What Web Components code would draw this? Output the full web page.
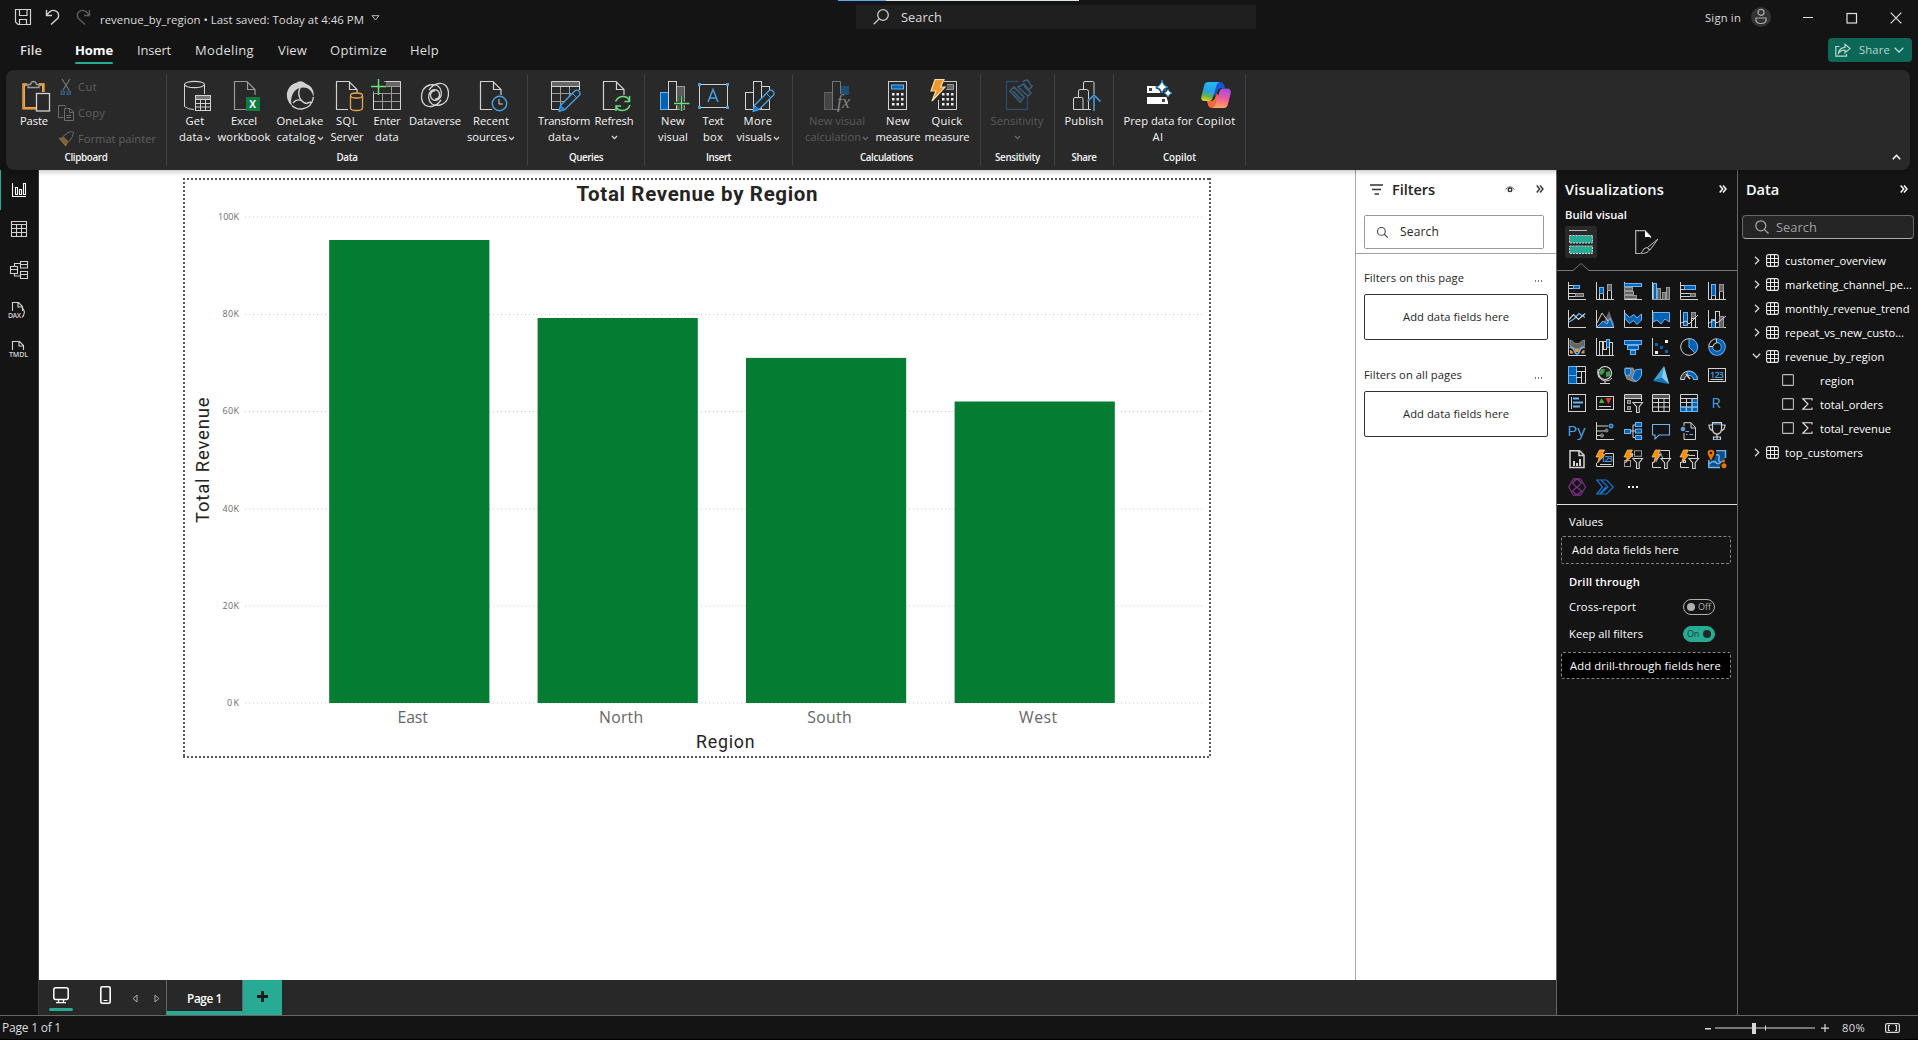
<!DOCTYPE html>
<html lang="en">
<head>
<meta charset="utf-8">
<title>revenue_by_region</title>
<style>
html,body{margin:0;padding:0;background:#141414;width:1918px;height:1040px;overflow:hidden;font-family:"Open Sans","Noto Sans",sans-serif;color:#fff}
</style>
</head>
<body>
<app-window></app-window>
<script>
const W='#d2d2d2', B='#0063b5', L='#6cb4f0', G='#646464', H='#9a9a9a', O='#e8912d', GR='#6be07a', SK='#4a9fe0';
const s=(d,c=W,f='none',w=1)=>`<path d="${d}" stroke="${c}" fill="${f}" stroke-width="${w}"/>`;
const r=(x,y,w,h,c=W,f='none',k=1)=>`<rect x="${x}" y="${y}" width="${w}" height="${h}" stroke="${c}" fill="${f}" stroke-width="${k}"/>`;
const f=(x,y,w,h,c)=>`<rect x="${x}" y="${y}" width="${w}" height="${h}" fill="${c}"/>`;
const c=(x,y,q,st=W,fi='none',w=1)=>`<circle cx="${x}" cy="${y}" r="${q}" stroke="${st}" fill="${fi}" stroke-width="${w}"/>`;
const tx=(x,y,sz,t,col,e='')=>`<text x="${x}" y="${y}" font-size="${sz}" fill="${col}" font-family="Open Sans" ${e}>${t}</text>`;
const doc=(x,col=W)=>s(`M${x+21} 16V10.5L${x+13} 2.5H${x}.5V30.5H${x+12}M${x+13.5} 2.5V10.5H${x+21}`,col,'none',1.2);
const pencil=s('M12.5 26.5L26.5 12.2a3 3 0 0 1 4.6 0a3 3 0 0 1 0 4.4L17 30.5L11.3 32.2Z',SK,'#292929',1.4)+s('M12.5 26.5L17 30.5L11.3 32.2Z',SK,'#0078d4')+s('M24.5 14.5l4 4',SK);
const axis=s('M.5 0V17.5H18');
const bolt=`<path d="M3.5 0H8.5L6 4.5H9L1.5 13L3.3 7H0Z" fill="#ff8c00" stroke="#ffd28a" stroke-width=".7"/>`;
const fun=s('M9 8.5H18.5L15.2 12.7V18.5H12.6V12.7Z',W,'#141414',1.1);
const I={
 paste:[32,32,s('M9 5.5H5.7V29.3H18M21 5.5H25.3V13','#f2c078','none',2.6)+s('M9 5.5H5.7V29.3H18M21 5.5H25.3V13',O,'none',1.6)+s('M10 8.5V5.5H12.5Q13 2.5 15.5 2.5T18.5 5.5H21V8.5Z',H,'#292929',1.4)+r(18.5,14.5,13,17.5,W,'#292929',1.3)],
 cut:[16,16,s('M4 0L11 11M12 0L5 11','#767676','none',1.2)+r(3,12,3.5,3.5,'#335f80','#234a66')+r(9,12,3.5,3.5,'#335f80','#234a66')],
 copy:[16,16,s('M5.500 12.500H.5V.5H7L8 2',"#6c6c6c")+s('M6.500 3.500H12L15.500 7V15.500H6.500ZM11.500 3.500V7.500H15.500M8.500 10.500H13M8.500 12.500H13',"#6c6c6c")],
 painter:[16,16,s('M5 5.500L10.500 11L14.500 5.500L15.500 1.500L13.500 .5L10 1.500Z','#6c6c6c')+`<path d="M1 7L5.500 6L10.500 11L8 15.500Z" fill="#7e6434"/>`+s('M1 7L8 15','#8e7c50')],
 getdata:[32,32,'<ellipse cx="15.500" cy="5.500" rx="10" ry="3.200" fill="none" stroke="#d2d2d2" stroke-width="1.200"/>'+s('M5.500 5.500V27.500Q9 30.500 15 30.500M25.500 5.500V15')+r(16.500,16.500,15,15,W,'#292929')+f(17,17,14,3,'#777')+s('M16.500 20.500H31.500M16.500 24.500H31.500M16.500 28H31.500M21.500 20.500V31.500M26.500 20.500V31.500')],
 excel:[32,32,doc(6,H)+f(18,18,14,14,'#107c41')+tx(21.200,29,10,'X','#fff','font-weight="700"')],
 onelake:[32,32,`<path d="M13 3.500A13 13 0 0 0 4.500 22.500Q5.500 25.500 8 26.500Q6 21 8.500 15.500T16 9Q22 7.500 26 11Q29 14 29.500 18Q30.500 11 26 7Q23 5 21.500 4.500Q17 .5 13 3.500Z" fill="#d0d0d0"/>`+s('M8 26.500Q12 30.500 18 30Q28 28.500 29.500 18M16 9Q13 15 17 21Q19 23.500 22 24.500L27 23M9 24Q13 19 18 22',W,'none',1.400)],
 sql:[32,32,doc(5)+'<rect x="18" y="16" width="14" height="16" fill="#292929"/><path d="M19.500 17V29Q19.500 31.500 25.500 31.500T31.500 29V17" fill="#292929" stroke="#e8a54f" stroke-width="1.300"/><ellipse cx="25.500" cy="16.500" rx="6" ry="2.500" fill="#292929" stroke="#e8a54f" stroke-width="1.300"/>'],
 enter:[32,32,f(15,3,15,4,'#666')+s('M13 2.500H29.500V30.500H2.500V12M16 7.500H29.500M2.500 14.500H29.500M2.500 22.500H29.500M11.500 15V30.500M20.500 8V30.500',H)+s('M2.500 15V30.500H29.500V2.500H15')+s('M7.500 0V16M0 7.500H15.500',GR,'none',1.500)],
 dataverse:[32,32,s('M22 21C17 28 10 29 6 26C2 23 1.500 16 4 11C7 6 14 4 19 7C23 10 23.500 16 20.500 19.500C17 23 12 21 11.500 17C11 14 13.500 11.500 16 12M10 11C15 4 22 3 26 6C30 9 30.500 16 28 21C25 26 18 28 13 25C9 22 8.500 16 11.500 12.500C15 9 20 11 20.500 15C21 18 18.500 20.500 16 20',W,'none',1.300)],
 recent:[32,32,doc(5)+c(24.500,24.500,7.200,SK,'#292929',1.400)+s('M24 20V25H28')],
 transform:[32,32,f(4,3,27,4,'#666')+s('M3.500 14.500H31M3.500 22.500H20M12.500 7.500V30.500M21.500 7.500V20',H)+s('M17 30.500H3.500V2.500H31.500V11M3.500 7.500H31.500')+pencil],
 refresh:[32,32,doc(5)+f(17,17,16,16,'#292929')+s('M17.500 22.500Q20 17.500 25 17.500T31.500 22M31.500 17V22.500H26.500M32 26Q30 31.500 24.500 31.500T18 27M18 32V27H23',GR,'none',1.500)],
 newvisual:[32,32,r(3.500,13.500,8,17,L,B)+r(19.500,7.500,8,23,H,'#5c5c5c')+r(11.500,2.500,8,28,W,'#292929')+s('M24.500 16.500V32M17 24.500H32.500','#292929','none',3.500)+s('M24.500 16.500V32M17 24.500H32.500',GR,'none',1.400)],
 textbox:[32,32,r(2.500,5.500,28,23)+[[1,4],[29,4],[1,27],[29,27]].map(p=>f(p[0],p[1],3,3,SK)).join('')+s('M11 23L16 10.500L21 23M12.700 19H19.300',SK,'none',1.500)],
 more:[32,32,r(3.500,13.500,8,17)+r(19.500,7.500,8,23)+r(11.500,2.500,8,28,W,'#292929')+pencil],
 newcalc:[32,32,r(3.500,13.500,8,17,'#606060','#444')+f(20,7,8,9,'#1f4e75')+s('M19.500 30.500H11.500V2.500H19.500V15','#767676')+`<text x="16" y="29" font-family="Liberation Serif" font-style="italic" font-size="18" fill="#858585">fx</text>`],
 newmeasure:[32,32,r(6.500,2.500,18,28)+r(9.500,6,12,4,L,B)+[14,19,24].map(y=>[10,14.500,19].map(x=>f(x,y,2.500,2.500,'#eee')).join('')).join('')],
 quick:[32,32,s('M13 2.500H25.500V30.500H7.500V21')+f(16,6,6,4,'#666')+s('M15 10.500H22.500V5.500H16',H)+[14,19,24].map(y=>[11,15.500,20].map(x=>f(x,y,2.500,2.500,'#eee')).join('')).join('')+`<path d="M4 .5H13L9.500 8H14L1 22L5 12H0Z" fill="#f0962e" stroke="#fbdca4" stroke-width="1.200"/>`],
 sens:[32,32,s('M18 2.500H5.500V30.500H26.500V17',"#2b4d66",'none',1.300)+s('M9 12L13 8L23 18L19 23ZM12 12L19.500 20M23 5L17 8L27 17L30 14L24 8ZM22 3Q26-1 28 3T31 7L28 11L23 5','#3a5e78','none',1.600)],
 publish:[32,32,s('M5.500 30.500V20Q5.500 18.500 7 18.500H13.500Q15 18.500 15 20V30.500ZM10.500 18V12Q10.500 10.500 12 10.500H18.500Q20.500 10.500 20.500 12.500V20M15.500 10V4Q15.500 2.500 17 2.500H24.500Q26 2.500 26 4V15M15 30.500H23')+s('M20.500 21V30.500')+s('M26 32V18M19.500 22.500L26 16L32.500 22.500',SK,'none',1.500)],
 prep:[32,32,f(5,7,21,7,'#fff')+f(5,18,21,7,'#fff')+f(7,9,3,3,'#444')+f(20,20,3,3,'#444')+`<path d="M20 1Q21 7 26 8Q21 9 20 14Q19 9 14 8Q19 7 20 1ZM26 10Q27 13 30 14Q27 15 26 18Q25 15 22 14Q25 13 26 10Z" fill="#292929" stroke="#292929" stroke-width="3"/><path d="M20 1Q21 7 26 8Q21 9 20 14Q19 9 14 8Q19 7 20 1ZM26 10Q27 13 30 14Q27 15 26 18Q25 15 22 14Q25 13 26 10Z" fill="#fff" stroke="#1683c8" stroke-width="1"/>`],
 copilot:[32,32,`<defs><linearGradient id="ga" x1=".5" y1="0" x2=".3" y2="1"><stop offset="0" stop-color="#23b7f5"/><stop offset=".5" stop-color="#2d9fe0"/><stop offset=".75" stop-color="#63b34a"/><stop offset="1" stop-color="#f0cf25"/></linearGradient><linearGradient id="gb" x1=".6" y1="0" x2=".4" y2="1"><stop offset="0" stop-color="#a04ce8"/><stop offset=".5" stop-color="#ee5b9c"/><stop offset="1" stop-color="#ffa75c"/></linearGradient></defs><path d="M15 3H20Q23 3 24 6L25 9H22Q18 9 17 13L15 18L12 11Z" fill="#1657d6"/><path d="M17 29H12Q9 29 8 26L7 22H11Q14 22 15 19L17 14L20 22Z" fill="#f4683f"/><path d="M8 3H19Q17 4 16 8L13 18Q12 22 9 22H5Q0 22 1.500 17L4 7Q5 3 8 3Z" fill="url(#ga)"/><path d="M24 29H13Q15 28 16 24L19 14Q20 9.500 23 9.500H27Q32 9.500 30.500 15L28 25Q27 29 24 29Z" fill="url(#gb)"/>`],
 /* title bar */
 save:[16,16,s('M.5 .5H15.500V15.500H3L.5 13ZM4.500 .5V6.500H12V.5M4.500 15.500V10.500H11.500V15.500',W,'none',1.200)],
 undo:[16,16,s('M1.500 1V6.500H7M1.500 6.500Q6 0 10.500 1.800T13 9L6 15.500',W,'none',1.400)],
 redo:[16,16,s('M14.500 1V6.500H9M14.500 6.500Q10 0 5.500 1.800T3 9L10 15.500','#5c5c5c','none',1.400)],
 tri:[9,6,s('M1 .7H8L4.500 5Z','#bbb')],
 magBig:[16,16,c(10,6,5.300,'#c8c8c8','none',1.300)+s('M6 10L.7 15.300','#c8c8c8','none',1.300)],
 mag:[14,14,c(5.800,5.800,5,'#a8a8a8','none',1.200)+s('M9.300 9.300L13.500 13.500','#a8a8a8','none',1.200)],
 magDark:[11,11,c(4.400,4.400,3.900,'#444','none',1.100)+s('M7.200 7.200L10.700 10.700','#444','none',1.200)],
 avatar:[20,20,c(10,10,10,'none','#333')+c(10,5.300,3,'#aaa','none',1.200)+s('M5 11H15Q16 16.500 10 16.500T5 11Z','#aaa','none',1.200)],
 min:[12,12,s('M1 5.500H11','#e0e0e0')], max:[12,12,r(1,1.500,9.500,9.500,'#e0e0e0','none',1.200)], close:[12,12,s('M.7 .7L11.300 11.300M11.300 .7L.7 11.300','#e0e0e0','none',1.200)],
 share:[16,14,s('M4.500 3.500H.8V13.200H11.500V11','#b9d8d2','none',1.200)+s('M3.500 10Q4.500 4.500 10 4.300V1.200L15 5.500L10 9.800V7Q6 7 3.500 10Z','#b9d8d2','none',1.200)],
 chevL:[10,6,s('M.7 .7L5 5L9.300 .7','#b9d8d2','none',1.300)],
 chev:[7,5,s('M1 1L3.500 3.600L6 1','#d8d8d8','none',1.200)],
 chevDim:[7,5,s('M1 1L3.500 3.600L6 1','#6a6a6a','none',1.300)],
 up:[9,6,s('M.8 5.200L4.500 1.300L8.200 5.200','#fff','none',1.600)],
 dblW:[8,8,s('M.7 .5L3.700 4L.7 7.500M4 .5L7 4L4 7.500','#fff','none',1.500)],
 dblD:[8,8,s('M.7 .5L3.700 4L.7 7.500M4 .5L7 4L4 7.500','#333','none',1.400)],
 /* left rail */
 report:[16,16,s('M1.500 1V14.500H15M4.500 12.500V5.500H6.500V12.500ZM8.500 12.500V7.500H10.500V12.500ZM12.500 12.500V1.500H14.500V12.500Z','#fff','none',1.100)],
 table:[16,16,s('M.5 .5H15.500V15.500H.5ZM.5 3.500H15.500M.5 7.500H15.500M.5 11.500H15.500M5.500 3.500V15.500M10.500 3.500V15.500',W,'none',1.100)],
 model:[18,18,s('M10.500 .5H17.500V7H10.500ZM10.500 3.500H17.500M10.500 10.500H17.500V17.500H10.500ZM10.500 13.500H17.500M.5 5.500H7.500V12.500H.5ZM.5 8.500H7.500M4.500 5.500V2.500H10.500M4.500 12.500V15H10.500',W,'none',1.100)],
 dax:[20,18,s('M4.500 10V1.500H10.500L14.500 5.500V10M10 1.500V6H14.500M15 7.500Q18 12 14 16.500',W,'none',1.100)+tx(0,16.500,7,'DAX',W,'font-weight="600" textLength="13"')],
 tmdl:[20,18,s('M3.500 9V.5H10.500L14.500 4.500V9M10 .5V5H14.500',W,'none',1.100)+tx(0,16,7,'TMDL',W,'font-weight="600" textLength="19"')],
 /* filters */
 funnel:[13,11,s('M0 1H13M2 5.500H11M4.500 10H9','#333','none',1.600)],
 eye:[10,8,s('M.5 4.500Q5-1 9.500 4.500','#666')+c(5,4.800,1.800,'#333','none',1.400)],
 /* footer */
 monitor:[16,17,'<rect x=".8" y=".8" width="14.400" height="11.800" rx="2" stroke="#fff" fill="none" stroke-width="1.500"/>'+s('M5.500 12.500V15.500M10.500 12.500V15.500M3 15.700H13','#fff','none',1.300)],
 phone:[11,18,'<rect x=".8" y=".8" width="9.400" height="16.400" rx="1.500" stroke="#fff" fill="none" stroke-width="1.600"/>'+s('M3.500 14.500H7.500','#fff')],
 left:[6,9,s('M5 1V8L1 4.500Z','#aaa')], right:[6,9,s('M1 1V8L5 4.500Z','#aaa')],
 plus:[11,11,f(4,0,3,11,'#1c1c1c')+f(0,4,11,3,'#1c1c1c')],
 fit:[15,10,'<rect x=".6" y=".6" width="13.800" height="8.800" rx="1.500" stroke="#d8d8d8" fill="none" stroke-width="1.200"/>'+s('M5 2.500H3.500V7.500H5M10 2.500H11.500V7.500H10','#d8d8d8','none',1.200)],
 /* build tabs */
 build:[24,24,s('M0 .5H18','#bbb')+r(.5,5.500,23,7.500,'#d0d0d0','#28ab94','1" stroke-dasharray="2 1')+r(.5,16,23,7.500,'#d0d0d0','#28ab94','1" stroke-dasharray="2 1')],
 format:[24,24,s('M5 23.500H.7V.7H10L15.500 6.500V8','#b0b0b0','none',1.200)+`<path d="M10 .7V7H16Z" fill="#fff"/>`+s('M23 9L15 20L12.500 17.500Z','#bbb')+s('M12 17.500Q8 18 7.500 21.500L5.500 23.300Q12 24 14.500 20Z','#bbb')],
 /* data tree */
 chevR:[6,9,s('M1 .8L4.800 4.500L1 8.200','#d8d8d8','none',1.300)], chevD:[9,6,s('M.8 .8L4.500 4.500L8.200 .8','#d8d8d8','none',1.300)],
 tbl:[13,13,'<rect x=".6" y=".6" width="11.800" height="11.800" rx="2" stroke="#e8e8e8" fill="none" stroke-width="1.100"/>'+s('M.5 4.500H12.500M.5 8.500H12.500M4.500 .5V12.500M8.500 .5V12.500','#e8e8e8')],
 check:[12,12,'<rect x=".6" y=".6" width="10.800" height="10.800" rx="1" stroke="#bdbdbd" fill="none" stroke-width="1.100"/>'],
 sigma:[11,12,s('M10 2.500V.7H.8L6 6L.8 11.300H10V9.500','#e8e8e8','none',1.100)],
};
/* visual gallery, 18 x 18 each */
const V=[
 axis+r(.5,3.500,5,3)+r(5.500,3.500,6,3,L,B)+r(.5,11.500,7,3)+r(7.500,11.500,8,3,H,G),
 axis+r(3.500,11.500,4,6)+r(3.500,5.500,4,6,L,B)+r(11.500,8.500,4,9)+r(11.500,2.500,4,6,H,G),
 axis+r(.5,1.500,17,3,L,B)+r(.5,5.500,8,3,H,G)+r(.5,9.500,9,3,H,G)+r(.5,13.500,12,3,H,G),
 axis+r(1.500,1.500,3,16,L,B)+r(5.500,6.500,3,11,H,G)+r(10.500,10.500,3,7,H,G)+r(14.500,5.500,3,12,H,G),
 axis+r(.5,3.500,4,4)+r(4.500,3.500,11,4,L,B)+r(.5,11.500,10,3)+r(10.500,11.500,5,3,H,G),
 axis+r(3.500,13.500,4,4)+r(3.500,2.500,4,11,L,B)+r(11.500,9.500,4,8)+r(11.500,2.500,4,7,H,G),
 axis+s('M1 12L6 9L11 3.500L17 7.500',L,'none',1.200)+s('M1 9.500L5.500 4.500L10.500 9.500L17 3.500',W,'none',1.200),
 axis+`<path d="M8 12L13 1L18 14V17H1Z" fill="${G}"/>`+s('M1 13L6 3L12 11')+s('M1 17L7 11L11 14L14 8L17.500 17',L,B),
 axis+s('M1 3L5.500 7.500L10 4.500L13 8L17.500 4V10L13 14.500L9.500 10.500L5.500 13.500L1 8.500Z',L,B),
 axis+s('M1 2.500H17.500V12L13 9L9 14L5 10L1 12Z',L,B),
 axis+r(3.500,2.500,4,13,L,B)+r(11.500,2.500,4,6,H,G)+r(11.500,8.500,4,9)+s('M1 13L6 11L9 14L13 10L18 5'),
 axis+r(3.500,9.500,4,8,L,B)+r(7.500,1.500,4,16)+r(11.500,6.500,4,11,H,G)+s('M1 13L6 10L9 13L13 10L18 6'),
 axis+`<path d="M2 2Q5 3 6.500 5Q9 6.500 11.500 5Q13 3 16.500 2V8Q13 8 12 10.500Q9 13 6 10.500Q5 8 2 8Z" fill="${G}" stroke="${H}" stroke-width=".8"/><path d="M2 12Q4.500 12 5.500 15.500H2ZM16.500 12Q14 12 13 15.500H16.500ZM6.500 11.500Q9 9 11.500 11.500L10.500 14H7.500Z" fill="${O}"/>`+s('M1.500 9.500Q5 9 6 12Q7.500 16 9 16T12 12Q13 9 17 9.500',L,'none',1.700),
 axis+r(3.500,3.500,3,14)+r(7.500,3.500,3,8)+r(10.500,1.500,3,8,L,B)+r(13.500,4.500,3,13),
 r(.5,2.500,17,4,L,B)+r(3.500,7.500,11,4,L,B)+r(6.500,12.500,5,4,L,B),
 axis+f(3,5,3,3,B)+f(8,8,3,3,B)+f(13,2,3,3,'#eee')+f(3,13,3,3,'#eee')+f(13,12,3,3,B),
 c(9,9,8.300)+`<path d="M9 .7A8.300 8.300 0 0 1 15 15L9 9Z" fill="${B}" stroke="${L}"/>`,
 c(9,9,6.300,L,'none',5)+c(9,9,6.300,B,'none',3.200)+'<path d="M9 9L0 9A9 9 0 0 1 9 0Z" fill="#141414"/>'+s('M8.500 .7A8.300 8.300 0 0 0 .7 8.500H5A4 4 0 0 1 8.500 5Z'),
 r(.5,.5,8,17,L,B)+s('M.5 9.500H8.500',L)+s('M8.500 .5H17.500V17.500H8.500M8.500 5.500H17.500M13.500 5.500V17.500M8.500 11.500H13.500'),
 c(9,7,6.500,'#ddd','#1e1e1e',1.200)+`<path d="M5 3L9 3L8 7L5 9L3 7ZM10 6L14 5L14 10L10 11Z" fill="#3f9a4e"/>`+s('M2 3Q0 13 9 15Q14 15 16 12M9 15V17M4 17.500H14'),
 `<path d="M1 2H9L10 5H17L16 10Q15 15 11 15.500L8 15L3 13L1 8Z" fill="#777" stroke="#aaa" stroke-width=".8"/><path d="M1 2.500H6L7 5L6 9L2 9.500L1 7ZM11 4L17.500 3V9Q16 14 12 15.500L8 12Z" fill="${B}" stroke="${L}"/>`,
 `<path d="M12 0L17 18L10 12L1 15Z" fill="#3f9fd8"/><path d="M10 12L12 0L17 18Z" fill="#86cdf0"/><path d="M10 12L17 18L1 15Z" fill="#1478b8"/>`,
 `<path d="M.5 13.500A8.500 8.500 0 0 1 17.500 13.500H13.500A4.500 4.500 0 0 0 4.500 13.500Z" fill="#444" stroke="${W}"/><path d="M7 5.500A8.500 8.500 0 0 1 17.500 13.500H13.500A4.500 4.500 0 0 0 8 9.500Z" fill="${B}" stroke="${L}"/>`+s('M10 13L6 8',W,'none',1.500),
 r(.5,2.500,17,13)+tx(2,11.800,9,'123',SK,'font-weight="600" textLength="14"')+s('M2.500 13.500H15.500',W,'none',1),
 r(.5,.5,17,17)+s('M3.500 3V15')+s('M5 4.500H11M5 8.500H15M5 12.500H12',L,'none',2),
 r(.5,2.500,17,13)+`<path d="M3 9L5.500 4L8.500 9Z" fill="#4caf50"/><path d="M9.500 4H15.500L12.500 10Z" fill="#e03c31"/>`+s('M3 12.500H15'),
 f(1,1,16,3,G)+s('M8 17.500H.5V.5H17.500V7M.5 4.500H17.500')+r(3.500,6.500,3,3,H,G)+r(3.500,12.500,3,3,H,G)+fun,
 f(1,1,16,3,'#555')+s('M.5 .5H17.500V17.500H.5ZM.5 4.500H17.500M.5 8.500H17.500M.5 13H17.500M6.500 4.500V17.500M12 4.500V17.500'),
 f(12,4,6,14,B)+f(1,13,16,5,B)+s('M.5 .5H17.500V17.500H.5ZM.5 4.500H17.500M.5 8.500H17.500M.5 13H17.500M6.500 4.500V17.500M12 4.500V17.500')+s('M12 4.500V13H.5V17.500H17.500V4.500M12 8.500H17.500M12 13H17.500V17.500M12 13V17.500M6 13V17.500',L),
 tx(3.500,14.200,15,'R',SK,'font-weight="500"'),
 tx(-.8,14,15,'Py',SK,'font-weight="500" textLength="18.500" lengthAdjust="spacingAndGlyphs"'),
 s('M.5 0V17.500H18M1 4H12M1 9H9M1 13.500H5')+c(15,4,2,L,B)+c(10.500,8.500,1.500,H,G)+c(6,13.500,1.500,H,G),
 s('M6 9H11M9 3V15.500M9 3H12M9 15.500H12')+r(.5,7.500,6,4,L,B)+r(11.500,.5,6,4,L,B)+r(11.500,7,6,4,L,B)+r(11.500,13.500,6,4,L,B),
 s('M.5 2.500H17.500V13H7L3 17V13H.5Z',L,'none',1.100),
 s('M4 4V.7H11L15.500 5.500V17.500H4V11M11 1V6H15.500')+c(3,7,1.800,L,SK)+s('M5.500 9.500H9M6 12.500H7.500M9.500 12.500H13',L),
 s('M4.500 .7H13.500V8Q12.500 12 9 12T4.500 8ZM4.500 3H1Q1 8 5.500 9M13.500 3H17Q17 8 12.500 9M9 12V17M5.500 17.500H12.500V15H5.500Z',W,'none',1.200)+s('M5 2H13M5.500 17.500H12.500',L),
 s('M2 .7H11.500L16 5V17.500H2ZM11 1V5.500H16',W,'none',1.500)+f(5,11,2,5,W)+f(8,13,2,3,W)+f(11,9,2,7,W),
 s('M9 3.500H17.500V16.500H.5V13')+tx(4.500,12.300,9,'123',SK,'font-weight="600" textLength="12.500"')+s('M4 14.500H15.500')+bolt,
 r(10.500,.8,7,5.500,H)+r(.5,10.500,6,6,H)+r(5.500,3.500,3,3,L,B)+bolt+fun,
 s('M9 .5H17.500V8M.5 12V17.500H9')+s('M4 12L8.500 3L12 11',SK,'none',1.200)+bolt+fun,
 s('M9 .5H17.500V8M.5 12V17.500H9M9 5.500H15')+r(3.500,10.500,2,2,W)+bolt+fun,
 `<path d="M9 2H17V9L13 13L12 17H1V12L6 9Z" fill="#0f4f8a"/>`+s('M8 .8H17.500V8M.8 10V17.500H12M8 5Q12 4 11 8T13 12Q10 15 8 12.500T1 14',L,'none',1.500)+`<circle cx="3" cy="3" r="3.300" fill="#e87400"/><path d="M0 4.500H6L3 11Z" fill="#e87400"/><circle cx="3" cy="3" r="1.200" fill="#141414"/><circle cx="16" cy="15.800" r="2.500" fill="#e87400"/><circle cx="15.500" cy="11" r="1.500" fill="#e87400"/>`,
 s('M5.500 .8H12.500L17.500 9L12.500 17.200H5.500L.7 9ZM9 .8L4.500 5L9 9.500L13.500 5ZM9 9L4.500 13L9 17L13.500 13Z','#80308c','none',1.200),
 s('M.7 2H10.500L17.300 9L10.500 16H.7L6.500 9ZM5 2L12 9L4.500 16M10 9L3.500 16','#1672cf','none',1.200),
 f(4,8,2,2,'#eee')+f(8,8,2,2,'#eee')+f(12,8,2,2,'#eee')
];
V.forEach((v,i)=>I['v'+i]=[18,18,v]);

const def=(name,html,after)=>customElements.define(name,class extends HTMLElement{
  constructor(){super();this.attachShadow({mode:'open'})}
  connectedCallback(){ if(this.done)return; this.done=true;
    this.shadowRoot.innerHTML='<style>:host{display:block;box-sizing:border-box}</style>'+(typeof html==='function'?html(this):html);
    after&&after(this)}
});
/* text run tracked to a given advance width */
def('ui-text',e=>`<style>:host{display:block;flex:none;white-space:nowrap;width:${e.getAttribute('w')}px;font-size:${e.getAttribute('s')||11.2}px;line-height:16px}span{display:inline-block}</style><span><slot></slot></span>`,e=>{
  const sp=e.shadowRoot.querySelector('span'),w=+e.getAttribute('w');
  sp.style.letterSpacing=((w-sp.getBoundingClientRect().width)/e.textContent.length)+'px';
});
def('ui-icon',e=>{const i=I[e.getAttribute('n')];return `<style>:host{flex:none;width:${i[0]}px;height:${i[1]}px}svg{display:block;overflow:visible}</style><svg width="${i[0]}" height="${i[1]}" viewBox="0 0 ${i[0]} ${i[1]}" fill="none">${i[2]}</svg>`});
const T=(t,w,sz=11.2,st='')=>`<ui-text w="${w}" s="${sz}" style="${st}">${t}</ui-text>`;
const N=(n,st='')=>`<ui-icon n="${n}" style="${st}"></ui-icon>`;

def('title-bar',`<style>:host{display:flex;height:34px;position:relative;align-items:flex-start}
 .load{position:absolute;left:838px;top:0;width:241px;height:1px;background:linear-gradient(90deg,#5aa9f5 48px,#dce9e4 48px)}
 .search{display:flex;align-items:center;box-sizing:border-box;width:400px;height:24px;margin:5px 0 0 476px;padding-left:17px;background:#1f1f1f;border-radius:2px}
 ui-text{color:#dcdcdc}</style><div class="load"></div>
 ${N('save','margin:9px 0 0 15px')}${N('undo','margin:9px 0 0 14px')}${N('redo','margin:9px 0 0 14px')}
 ${T('revenue_by_region • Last saved: Today at 4:46 PM',264,11.4,'margin:12px 0 0 9px')}${N('tri','margin:15px 0 0 7px')}
 <div class="search">${N('magBig')}${T('Search',41,12.8,'margin-left:12px')}</div>
 ${T('Sign in',36,11.2,'margin:10px 0 0 449px')}${N('avatar','margin:7px 0 0 10px')}${N('min','margin:12px 0 0 31px')}${N('max','margin:12px 0 0 32px')}${N('close','margin:12px 0 0 32px')}`);

def('menu-tabs',`<style>:host{display:flex;height:36px;align-items:flex-start;padding-left:20px}
 ui-text{margin-top:8px;color:#dedede}.on{height:23px;margin:8px 24px 0 0}.on ui-text{margin:0;color:#fff;font-weight:700}.on:after{content:"";display:block;height:2px;margin-top:4px;background:#28ab94;border-radius:1px}
 .share{display:flex;align-items:center;box-sizing:border-box;width:84px;height:24px;margin:4px 6px 0 auto;padding-left:7px;background:#0c6757;border-radius:4px}.share ui-text{margin:0 4px 0 8px;color:#b9d8d2}</style>
 ${T('File',22,13,'margin-right:33px;font-weight:600')}<div class="on">${T('Home',38,13)}</div>
 ${T('Insert',34,13,'margin-right:24px')}${T('Modeling',59,13,'margin-right:24px')}${T('View',29,13,'margin-right:23px')}${T('Optimize',57,13,'margin-right:23px')}${T('Help',29,13)}
 <div class="share">${N('share')}${T('Share',31)}${N('chevL')}</div>`);

def('ribbon-button',e=>{
  const line=l=>{const [t,w,v]=l.split('|');return `<div class="l">${t?T(t,w):''}${v?N(e.hasAttribute('dim')?'chevDim':'chev','margin:'+(t?'2px 0 0 1px':'0')):''}</div>`};
  return `<style>:host{flex:none;width:32px;display:flex;flex-direction:column;align-items:center;padding-top:5px;color:${e.hasAttribute('dim')?'#5a5a5a':'#f4f4f4'}}.l{display:flex;align-items:center;height:16px}ui-icon{flex:none}.i{margin-bottom:2px}</style><div class="i">${N(e.getAttribute('icon'))}</div>`+e.getAttribute('label').split('/').map(line).join('')});
def('ribbon-group',e=>`<style>:host{flex:none;width:${e.getAttribute('w')}px;height:92px;margin-top:4px;border-right:1px solid #404040;display:flex;flex-direction:column;align-items:center}
 .b{display:flex;height:76px;width:100%}.n{color:#f4f4f4;font-weight:600}</style><div class="b"><slot></slot></div><div class="n">${T(e.getAttribute('label'),e.getAttribute('lw'),9.8)}</div>`);
const grp=(w,label,lw,start,btns)=>{let x=start;return `<ribbon-group w="${w}" label="${label}" lw="${lw}">`+btns.map(b=>{
  if(b.raw)return b.raw; const m=b[0]-16-x; x=b[0]+16;
  return `<ribbon-button style="margin-left:${m}px" icon="${b[1]}" label="${b[2]}" ${b[3]||''}></ribbon-button>`}).join('')+'</ribbon-group>'};
const small=`<div class="small"><div>${N('cut')}${T('Cut',19,11.2)}</div><div>${N('copy')}${T('Copy',27,11.2)}</div><div>${N('painter')}${T('Format painter',78,11.2)}</div></div>`;
def('ribbon-bar',`<style>:host{display:flex;height:100px;margin:0 8px 0 6px;background:#292929;border-radius:8px;position:relative;z-index:2;box-shadow:0 2px 5px rgba(0,0,0,.22)}
 .small{margin-left:8px}.small div{display:flex;gap:4px;align-items:center;height:26px;color:#606060}
 .up{margin:84px 9px 0 auto}</style>`+
 grp(161,'Clipboard',43,6,[[34,'paste','Paste|28'],{raw:small}])+
 grp(361,'Data',21,167,[[195,'getdata','Get|19/data|24|v'],[244,'excel','Excel|26/workbook|53'],[300,'onelake','OneLake|47/catalog|39|v'],[347,'sql','SQL|22/Server|33'],[387,'enter','Enter|27/data|24'],[435,'dataverse','Dataverse|52'],[491,'recent','Recent|36/sources|40|v']])+
 grp(117,'Queries',34,528,[[564,'transform','Transform|52/data|24|v'],[614,'refresh','Refresh|39/||v']])+
 grp(148,'Insert',25,645,[[673,'newvisual','New|24/visual|30'],[713,'textbox','Text|21/box|20'],[758,'more','More|29/visuals|35|v']])+
 grp(188,'Calculations',53,793,[[837,'newcalc','New visual|56/calculation|56|v','dim'],[898,'newmeasure','New|24/measure|45'],[947,'quick','Quick|31/measure|45']])+
 grp(74,'Sensitivity',45,981,[[1017,'sens','Sensitivity|53/||v','dim']])+
 grp(59,'Share',25,1055,[[1084,'publish','Publish|39']])+
 grp(132,'Copilot',33,1114,[[1158,'prep','Prep data for|69/AI|11'],[1216,'copilot','Copilot|39']])+
 `<div class="up">${N('up')}</div>`);

def('side-rail',`<style>:host{flex:none;width:39px;border-right:1px solid #3a3a3a;background:#141414}
 div{box-sizing:border-box;height:40px;display:flex;align-items:center;justify-content:center}.on{border-left:1px solid #28ab94}.on ui-icon{margin-left:-2px}</style>
 <div class="on">${N('report')}</div><div>${N('table','margin-top:-2px')}</div><div>${N('model')}</div><div>${N('dax','margin-left:-3px')}</div><div>${N('tmdl')}</div>`);

def('revenue-chart',()=>{
  const x0=183,y0=178,X=x=>x-x0,Y=y=>y-y0;
  const grid=[[217,'100K',21],[314.5,'80K',16.5],[411.5,'60K',16.5],[509,'40K',16.5],[606,'20K',16.5],[703,'0K',12]];
  const bars=[[329.2,240,'East',30.5],[537.6,318,'North',44],[746,357.9,'South',44.5],[954.6,401.5,'West',38]];
  const g='#047d32';
  return `<style>:host{width:1028px;height:580px;margin:8px 0 0 144px}svg{display:block}text{font-family:"Open Sans"}.d{font-family:Roboto}</style>
  <svg width="1028" height="580">
  <path d="M0 1H1028M0 579H1028M1 0V580M1027 0V580" stroke="#5a5a5a" stroke-width="2" stroke-dasharray="2 2" fill="none"/>
  <text class="d" x="${X(576.5)}" y="${Y(200.500)}" font-size="20.500" font-weight="700" fill="#252423" textLength="241">Total Revenue by Region</text>`+
  grid.map(q=>`<path d="M62 ${Y(q[0])}H1020" stroke="#c8c8c8" stroke-dasharray="1 3"/><text x="${56-q[2]}" y="${Y(q[0])+2.500}" font-size="9" fill="#6b6b6b" textLength="${q[2]}">${q[1]}</text>`).join('')+
  bars.map(b=>`<rect x="${X(b[0])}" y="${Y(b[1])}" width="160.200" height="${703-b[1]}" fill="${g}"/><text x="${X(b[0])+83.5-b[3]/2}" y="${Y(722.500)}" font-size="15.800" fill="#666" textLength="${b[3]}">${b[2]}</text>`).join('')+
  `<text class="d" x="${X(696)}" y="${Y(747.500)}" font-size="17.800" fill="#252423" textLength="58.500">Region</text>
  <text class="d" transform="translate(${X(208.5)} ${Y(523)}) rotate(-90)" font-size="18.500" fill="#252423" textLength="125.500">Total Revenue</text></svg>`});

def('filter-card',e=>`<style>:host{height:97px}.h{display:flex;justify-content:space-between;width:178px;height:16px}.d{display:flex;gap:1.5px;padding-top:10px}.d i{width:1.5px;height:1.5px;background:#777}
 .b{box-sizing:border-box;width:184px;height:46px;margin-top:8px;border:1px solid #333;border-radius:2px;display:flex;align-items:center;justify-content:center}</style>
 <div class="h">${T(e.getAttribute('label'),e.getAttribute('w'))}<span class="d"><i></i><i></i><i></i></span></div><div class="b">${T('Add data fields here',106)}</div>`);
def('filters-pane',`<style>:host{flex:none;width:201px;background:#fff;color:#252423;border-left:1px solid #a6a6a6}
 .h{display:flex;align-items:center;height:45px;padding:0 13px 0 14px;box-sizing:border-box}.h ui-text{margin:-7px 0 0 9px;font-weight:600}.h ui-icon{margin-top:-7px}
 .s{box-sizing:border-box;width:180px;height:34px;margin-left:8px;border:1px solid #9a9a9a;border-radius:2px;display:flex;align-items:center;padding-left:12px}
 .r{border-top:1px solid #a0a0a0;margin-top:4px;padding:16px 0 0 8px}.r filter-card:first-child .b{margin-top:9px}</style>
 <div class="h">${N('funnel')}${T('Filters',43,14.6)}${N('eye','margin-left:70px')}${N('dblD','margin-left:21px')}</div>
 <div class="s">${N('magDark')}${T('Search',39,12,'margin-left:12px')}</div>
 <div class="r"><filter-card label="Filters on this page" w="100"></filter-card><filter-card label="Filters on all pages" w="98"></filter-card></div>`);

def('toggle-row',e=>{const on=e.hasAttribute('on');return `<style>:host{display:flex;align-items:center;justify-content:space-between;width:146px;height:16px}
 .t{box-sizing:border-box;width:32px;height:16px;border-radius:8px;border:1px solid ${on?'#28ab94':'#b0b0b0'};background:${on?'#28ab94':'none'};color:${on?'#1b3b36':'#b0b0b0'};display:flex;align-items:center;padding:0 3px;justify-content:space-between;flex-direction:${on?'row-reverse':'row'}}.t i{width:8px;height:8px;border-radius:50%;background:${on?'#1f2a28':'#b0b0b0'}}</style>
 ${T(e.getAttribute('label'),e.getAttribute('w'))}<div class="t"><i></i>${T(on?'On':'Off',on?12:13,9)}</div>`});
def('viz-pane',`<style>:host{flex:none;width:181px;border-left:1px solid #666;background:#141414}
 .h{display:flex;align-items:center;justify-content:space-between;padding:0 10px 0 8px;height:40px}.h ui-text{font-weight:600;margin-top:-3px}.h ui-icon{margin-top:-2px}
 .bt{display:flex;height:38px;padding-left:8px;margin-top:3px}.on{width:32px;height:32px;background:#292929;border-radius:2px;display:flex;align-items:center;justify-content:center;margin-right:38px}
 .g{display:grid;grid-template-columns:repeat(6,18px);gap:10px;padding:11px 0 8px 11px}
 .v{border-top:1px solid #e0e0e0;padding:9px 0 0 4px}.v>ui-text{margin-left:8px}.b{box-sizing:border-box;width:170px;border:1px dashed #858585;display:flex;align-items:center;border-radius:2px}toggle-row{margin-left:8px}</style>
 <div class="h">${T('Visualizations',99,14.6)}${N('dblW')}</div>
 ${T('Build visual',62,11.2,'margin:-3px 0 0 8px;font-weight:600')}
 <div class="bt"><div class="on">${N('build')}</div>${N('format','margin-top:4px')}</div>
 <svg width="180" height="9" style="display:block;margin-top:-2px" fill="none" stroke="#777"><path d="M0 8.500H16L24 1.500L32 8.500H180"/></svg>
 <div class="g">${V.map((v,i)=>N('v'+i)).join('')}</div>
 <div class="v">${T('Values',34)}<div class="b" style="height:28px;margin-top:6px;padding-left:10px">${T('Add data fields here',107)}</div>
 ${T('Drill through',71,11.2,'margin-top:10px;font-weight:600')}<toggle-row label="Cross-report" w="67" style="margin-top:9px"></toggle-row><toggle-row on label="Keep all filters" w="74" style="margin-top:11px"></toggle-row>
 <div class="b" style="height:27px;margin-top:10px;padding-left:8px;background:#000">${T('Add drill-through fields here',151)}</div></div>`);

def('data-row',e=>{const k=e.getAttribute('kind'),t=T(e.getAttribute('label'),e.getAttribute('w'),11.2,'margin-top:1px');
  return `<style>:host{display:flex;align-items:center;height:24px}.c{width:9px;display:flex;justify-content:center;margin:0 4px 0 14px}.m{width:10px;margin:0 7px 0 9px}ui-text{font-weight:500}</style>`+
  (k==='field'?N('check','margin-left:44px')+`<div class="m">${e.hasAttribute('sum')?N('sigma','margin-left:-1px'):''}</div>`+t:`<div class="c">${N(k==='open'?'chevD':'chevR')}</div>${N('tbl','margin:0 6px 0 1px')}`+t)});
def('data-pane',`<style>:host{flex:none;width:181px;border-left:1px solid #666;background:#141414}
 .h{display:flex;align-items:center;justify-content:space-between;padding:0 10px 0 8px;height:40px}.h ui-text{font-weight:600;margin-top:-3px}.h ui-icon{margin-top:-2px}
 .s{box-sizing:border-box;width:172px;height:24px;margin:5px 0 9px 4px;border:1px solid #666;border-bottom-color:#aaa;border-radius:4px;background:#252525;display:flex;align-items:center;padding-left:12px;color:#a0a0a0}</style>
 <div class="h">${T('Data',33,14.6)}${N('dblW')}</div><div class="s">${N('mag')}${T('Search',41,12.8,'margin:-1px 0 0 7px')}</div>`+
 [['','customer_overview',101],['','marketing_channel_pe...',127],['','monthly_revenue_trend',124.5],['','repeat_vs_new_custo...',119],['open','revenue_by_region',99.5],['field','region',34],['field','total_orders',63,'sum'],['field','total_revenue',71,'sum'],['','top_customers',78]].map(q=>`<data-row kind="${q[0]}" label="${q[1]}" w="${q[2]}" ${q[3]||''}></data-row>`).join(''));

def('page-tabs',`<style>:host{display:flex;height:35px;background:#282828;align-items:flex-start}
 .m{margin:7px 0 0 10px;width:24px;display:flex;flex-direction:column;align-items:center}.m:after{content:"";width:24px;height:3px;border-radius:1.5px;background:#28ab94;margin-top:4px}
 .t{box-sizing:border-box;width:77px;height:35px;margin-left:6px;border-left:1px solid #666;border-right:1px solid #666;border-bottom:4px solid #28ab94;padding:10px 0 0 20px;font-weight:600}
 .a{width:39px;height:35px;background:#28ab94;display:flex;align-items:center;justify-content:center}</style>
 <div class="m">${N('monitor')}</div>${N('phone','margin:6px 0 0 27px')}${N('left','margin:14px 0 0 21px')}${N('right','margin:14px 0 0 16px')}
 <div class="t">${T('Page 1',35,11.8)}</div><div class="a">${N('plus','margin-top:-3px')}</div>`);

def('status-bar',`<style>:host{display:flex;align-items:center;height:25px;border-top:1px solid #666;border-bottom:1px solid #000;color:#dcdcdc;padding:0 18px 0 2px}
 .z{margin-left:auto;display:flex;align-items:center}svg{display:block}</style>${T('Page 1 of 1',59,12,'margin-top:1px')}
 <div class="z"><svg width="124" height="12" style="margin:0 13px 0 0" fill="#d8d8d8"><path d="M0 6h6v1.500H0ZM10 5.500h100v1H10ZM47 1h4v11h-4ZM60 3.500h1v5h-1ZM116 5.500h8v1.200h-8ZM119.400 2h1.200v8h-1.200Z"/></svg>${T('80%',23,11.2)}${N('fit','margin-left:20px')}</div>`);

def('app-window',`<style>:host{display:flex;flex-direction:column;width:1918px;height:1040px}
 .main{display:flex;height:845px}.center{flex:1;display:flex;flex-direction:column}.work{display:flex;height:810px}.canvas{flex:1;background:#fff}</style>
 <title-bar></title-bar><menu-tabs></menu-tabs><ribbon-bar></ribbon-bar>
 <div class="main"><side-rail></side-rail><div class="center"><div class="work"><div class="canvas"><revenue-chart></revenue-chart></div><filters-pane></filters-pane></div><page-tabs></page-tabs></div><viz-pane></viz-pane><data-pane></data-pane></div>
 <status-bar></status-bar>`);
</script>
</body>
</html>
